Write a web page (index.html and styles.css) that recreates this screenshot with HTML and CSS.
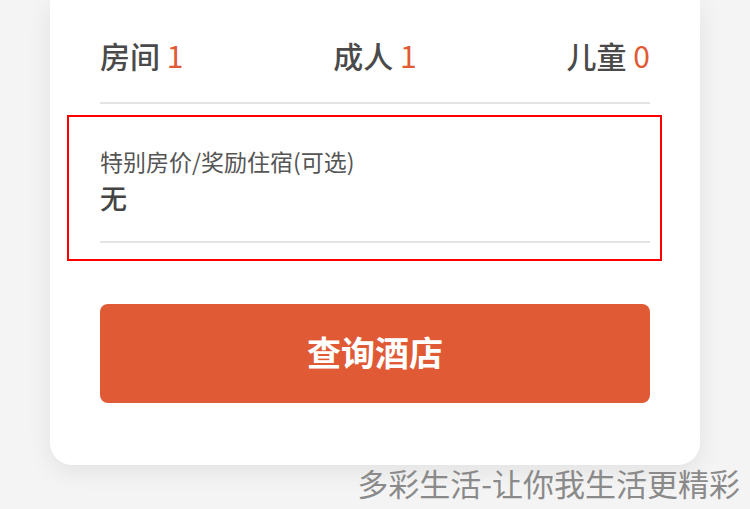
FILE: index.html
```html
<!DOCTYPE html>
<html lang="zh-CN">
<head>
    <meta charset="UTF-8">
    <title>查询酒店</title>
    <link rel="stylesheet" href="styles.css">
</head>
<body>
    <div class="card">
        <div class="guests">
            <div class="guest-item">房间 <span class="count">1</span></div>
            <div class="guest-item">成人 <span class="count">1</span></div>
            <div class="guest-item">儿童 <span class="count">0</span></div>
        </div>

        <!-- highlighted field -->
        <div class="highlight">
            <div class="special-field">
                <p class="field-label">特别房价/奖励住宿(可选)</p>
                <p class="field-value">无</p>
            </div>
        </div>

        <button class="search-button">查询酒店</button>
    </div>
    <p class="watermark">多彩生活-让你我生活更精彩</p>
</body>
</html>
```

FILE: styles.css
```css
body {
    font-family: "Noto Sans CJK SC", "Noto Sans", sans-serif;
    background-color: #f4f4f4;
    margin: 0;
    padding: 0;
    overflow: hidden;
}

.card {
    margin: 0 50px;
    padding: 30px 50px 62px;
    background-color: #ffffff;
    border-radius: 0 0 22px 22px;
    box-shadow: 0 6px 24px rgba(0, 0, 0, 0.08);
}

.guests {
    display: flex;
    justify-content: space-between;
    padding-bottom: 22px;
    border-bottom: 2px solid #e4e4e4;
}

.guest-item {
    font-size: 30px;
    line-height: 50px;
    font-weight: 500;
    color: #4a4a4a;
}

.count {
    color: #e05a36;
    font-weight: 400;
}

.highlight {
    margin: 11px -12px 0 -33px;
    padding: 0 10px 16px 31px;
    border: 2px solid #ff0000;
}

.special-field {
    padding-top: 28px;
    padding-bottom: 22px;
    border-bottom: 2px solid #e4e4e4;
}

.field-label {
    margin: 0;
    font-size: 23px;
    line-height: 32px;
    color: #555555;
}

.field-value {
    margin: 0;
    font-size: 27px;
    line-height: 42px;
    font-weight: 500;
    color: #444444;
}

.search-button {
    display: block;
    width: 100%;
    height: 99px;
    margin-top: 43px;
    padding: 0 0 4px;
    border: none;
    border-radius: 8px;
    background-color: #e05a36;
    color: #ffffff;
    font-family: inherit;
    font-size: 34px;
    font-weight: 700;
}

.watermark {
    margin: 0 10px 0 0;
    text-align: right;
    font-size: 31px;
    line-height: 36px;
    color: #8a8a8a;
}
```
